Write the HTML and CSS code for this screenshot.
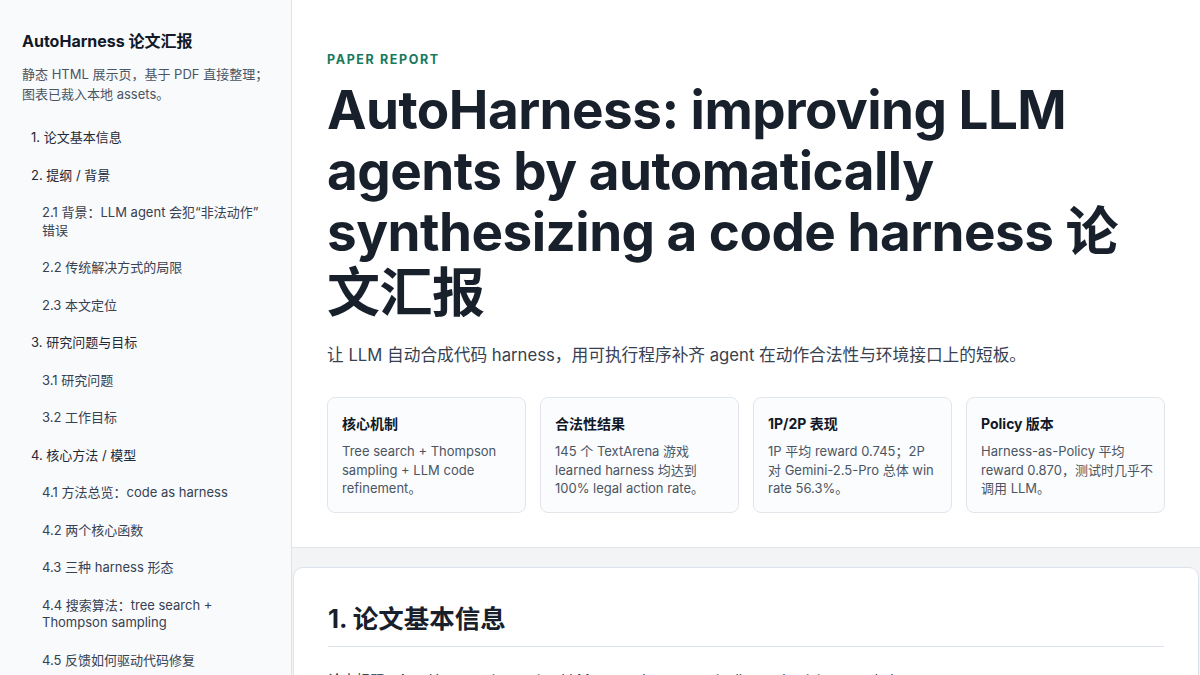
FILE: index.html
```html
<!DOCTYPE html>
<html lang="zh-CN">
<head>
    <meta charset="utf-8">
    <title>AutoHarness 论文汇报</title>
    <link rel="stylesheet" href="styles.css">
</head>
<body>
    <div class="layout">
        <aside class="sidebar">
            <h2 class="side-title">AutoHarness 论文汇报</h2>
            <p class="side-desc">静态 HTML 展示页，基于 PDF 直接整理；图表已裁入本地 assets。</p>
            <nav class="toc">
                <a class="toc-item" href="#s1">1. 论文基本信息</a>
                <a class="toc-item" href="#s2">2. 提纲 / 背景</a>
                <a class="toc-item sub" href="#s2-1">2.1 背景：LLM agent 会犯“非法动作”错误</a>
                <a class="toc-item sub" href="#s2-2">2.2 传统解决方式的局限</a>
                <a class="toc-item sub" href="#s2-3">2.3 本文定位</a>
                <a class="toc-item" href="#s3">3. 研究问题与目标</a>
                <a class="toc-item sub" href="#s3-1">3.1 研究问题</a>
                <a class="toc-item sub" href="#s3-2">3.2 工作目标</a>
                <a class="toc-item" href="#s4">4. 核心方法 / 模型</a>
                <a class="toc-item sub" href="#s4-1">4.1 方法总览：code as harness</a>
                <a class="toc-item sub" href="#s4-2">4.2 两个核心函数</a>
                <a class="toc-item sub" href="#s4-3">4.3 三种 harness 形态</a>
                <a class="toc-item sub" href="#s4-4">4.4 搜索算法：tree search + Thompson sampling</a>
                <a class="toc-item sub" href="#s4-5">4.5 反馈如何驱动代码修复</a>
            </nav>
        </aside>
        <main class="main">
            <header class="hero">
                <p class="eyebrow">PAPER REPORT</p>
                <h1 class="hero-title">AutoHarness: improving LLM agents by automatically synthesizing a code harness 论文汇报</h1>
                <p class="hero-sub">让 LLM 自动合成代码 harness，用可执行程序补齐 agent 在动作合法性与环境接口上的短板。</p>
                <div class="stats">
                    <div class="stat">
                        <h3>核心机制</h3>
                        <p>Tree search + Thompson sampling + LLM code refinement。</p>
                    </div>
                    <div class="stat">
                        <h3>合法性结果</h3>
                        <p>145 个 TextArena 游戏 learned harness 均达到 100% legal action rate。</p>
                    </div>
                    <div class="stat">
                        <h3>1P/2P 表现</h3>
                        <p>1P 平均 reward 0.745；2P 对 Gemini-2.5-Pro 总体 win rate 56.3%。</p>
                    </div>
                    <div class="stat">
                        <h3>Policy 版本</h3>
                        <p>Harness-as-Policy 平均 reward 0.870，测试时几乎不调用 LLM。</p>
                    </div>
                </div>
            </header>
            <section class="section" id="s1">
                <h2>1. 论文基本信息</h2>
                <p class="section-lead">论文标题：AutoHarness: improving LLM agents by automatically synthesizing a code harness</p>
            </section>
        </main>
    </div>
</body>
</html>
```

FILE: styles.css
```css
* {
    box-sizing: border-box;
}
html, body {
    margin: 0;
    height: 100%;
}
body {
    font-family: Inter, "Noto Sans CJK SC", sans-serif;
    color: #1f2937;
    background-color: #f3f4f6;
    overflow: hidden;
}
.layout {
    display: grid;
    grid-template-columns: 292px 1fr;
    height: 100vh;
}
.sidebar {
    background-color: #f8fafc;
    border-right: 1px solid #dde3ea;
    padding: 31px 22px 20px 22px;
    overflow: hidden;
}
.side-title {
    font-size: 16px;
    font-weight: 700;
    color: #111827;
    margin: 0 0 13px 0;
    line-height: 20px;
}
.side-desc {
    font-size: 13px;
    line-height: 20px;
    color: #4b5563;
    margin: 0 0 15px 0;
}
.toc {
    display: flex;
    flex-direction: column;
}
.toc-item {
    display: block;
    font-size: 13px;
    line-height: 17.5px;
    padding: 10px 8px 10px 9px;
    color: #1f2937;
    text-decoration: none;
}
.toc-item.sub {
    padding-left: 20px;
    color: #374151;
}
.main {
    overflow: hidden;
}
.hero {
    background-color: #ffffff;
    border-bottom: 1px solid #e2e6eb;
    padding: 52px 35px 34px 35px;
}
.eyebrow {
    font-size: 12.5px;
    font-weight: 700;
    letter-spacing: 0.13em;
    color: #17795e;
    margin: 0 0 12px 0;
    line-height: 16px;
}
.hero-title {
    font-size: 53px;
    line-height: 61px;
    font-weight: 700;
    letter-spacing: -0.01em;
    color: #18202c;
    margin: 0 0 19px 0;
}
.hero-sub {
    font-size: 16.7px;
    line-height: 24px;
    color: #374151;
    margin: 0 0 30px 0;
}
.stats {
    display: grid;
    grid-template-columns: repeat(4, 1fr);
    gap: 14px;
}
.stat {
    border: 1px solid #e2e6eb;
    border-radius: 8px;
    background-color: #fbfcfd;
    padding: 16px 10px 14px 14px;
    min-height: 115px;
}
.stat h3 {
    font-size: 14px;
    font-weight: 700;
    line-height: 20px;
    color: #111827;
    margin: 0 0 8px 0;
}
.stat p {
    font-size: 13px;
    line-height: 18.5px;
    color: #4b5563;
    margin: 0;
}
.section {
    background-color: #ffffff;
    border: 1px solid #dde3ea;
    border-radius: 10px;
    margin: 19px 1px 0 1px;
    padding: 34px 34px 30px 34px;
}
.section h2 {
    font-size: 25.5px;
    line-height: 34px;
    font-weight: 700;
    color: #18202c;
    margin: 0;
    padding-bottom: 10px;
    border-bottom: 1px solid #dde3ea;
}
.section-lead {
    font-size: 14px;
    line-height: 22px;
    color: #374151;
    margin: 22px 0 0 0;
}
```
